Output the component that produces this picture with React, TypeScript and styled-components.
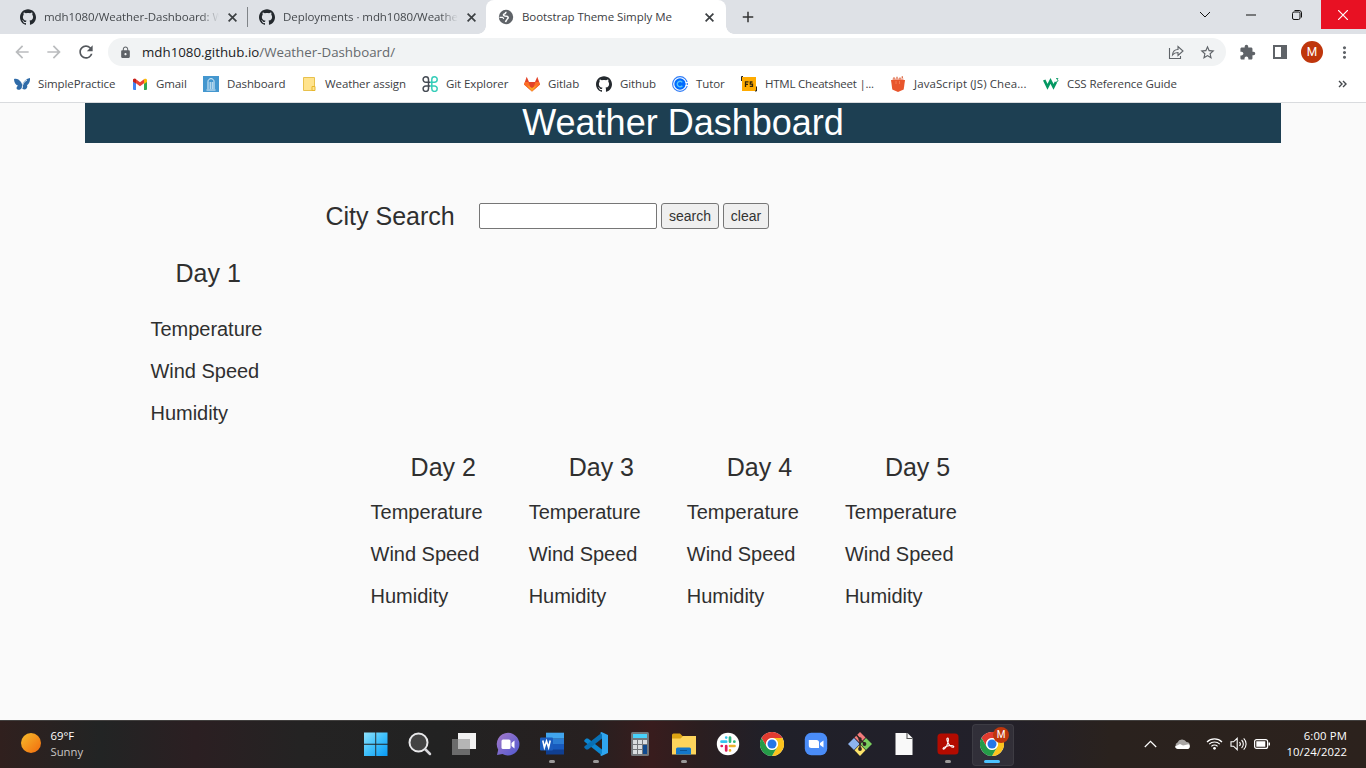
import React from 'react';
import styled, { createGlobalStyle } from 'styled-components';
import { SiGithub } from 'react-icons/si';
import {
  MdArrowBack, MdArrowForward, MdRefresh, MdLock, MdStarBorder, MdExtension,
  MdMoreVert, MdAdd,
} from 'react-icons/md';

const GlobalStyle = createGlobalStyle`
  * { box-sizing: border-box; }
  body { margin: 0; background: #fafafa; font-family: "Open Sans", "Noto Sans", sans-serif; }
`;

const Screen = styled.div`
  width: 1366px; height: 768px; display: flex; flex-direction: column; overflow: hidden;
`;

/* ---------- browser chrome ---------- */
const TabStrip = styled.div`
  height: 34px; flex: none; background: #dee1e6; display: flex; align-items: stretch; padding-left: 8px;
`;
const Tab = styled.div<{ $w: number; $pad?: number; $active?: boolean; $divider?: boolean }>`
  position: relative; width: ${p => p.$w}px; display: flex; align-items: center; padding-left: ${p => p.$pad ?? 12}px;
  color: ${p => (p.$active ? '#3c4043' : '#45494d')};
  background: ${p => (p.$active ? '#fff' : 'transparent')};
  border-radius: 8px 8px 0 0;
  ${p => p.$divider && `&::after { content: ''; position: absolute; right: 0; top: 7px; width: 1px; height: 20px; background: #808488; }`}
  ${p => p.$active && `
    &::before, &::after { content: ''; position: absolute; bottom: 0; width: 8px; height: 8px; }
    &::before { left: -8px; background: radial-gradient(circle at 0 0, transparent 7.5px, #fff 8px); }
    &::after { right: -8px; background: radial-gradient(circle at 100% 0, transparent 7.5px, #fff 8px); }
  `}
`;
const TabTitle = styled.span<{ $w: number; $fade?: boolean }>`
  width: ${p => p.$w}px; margin-left: 8px; font-size: 11.5px; line-height: 16px; white-space: nowrap; overflow: hidden;
  letter-spacing: -0.06px;
  ${p => p.$fade && 'mask-image: linear-gradient(90deg, #000 calc(100% - 18px), transparent);'}
`;
const CloseSvg = styled.svg`margin-left: 9px; width: 9px; height: 9px; flex: none; stroke: #3c4043; stroke-width: 1.7; fill: none;`;
const NewTab = styled(MdAdd)`margin: 8px 0 0 13px; width: 18px; height: 18px; color: #333;`;
const WindowButtons = styled.div`margin-left: auto; display: flex; height: 29px;`;
const WindowButton = styled.div<{ $close?: boolean }>`
  width: 46px; display: flex; align-items: center; justify-content: center;
  background: ${p => (p.$close ? '#e81123' : 'transparent')};
  color: ${p => (p.$close ? '#fff' : '#111')};
  padding-right: 2px;
  ${p => p.$close && 'width: 45px;'}
`;

const Toolbar = styled.div`
  height: 36px; flex: none; background: #fff; display: flex; align-items: center; color: #5f6368;
`;
const NavButton = styled.span<{ $off?: boolean }>`
  width: 32px; display: flex; justify-content: center; color: ${p => (p.$off ? '#babcbe' : '#54585d')};
  svg { width: 20px; height: 20px; }
`;
const NavGroup = styled.div`display: flex; padding-left: 6px; width: 108px;`;
const AddressBar = styled.div`
  width: 1118px; height: 28px; border-radius: 14px; background: #f1f3f4; display: flex; align-items: center; padding: 0 10px 0 11px;
`;
const Url = styled.span`
  margin-left: 10px; font-size: 13.3px; line-height: 20px; letter-spacing: 0.01px; color: #65696d; white-space: nowrap;
  b { font-weight: 400; color: #202124; }
`;
const AddressActions = styled.div`margin-left: auto; display: flex; align-items: center; gap: 15px;`;
const ToolbarActions = styled.div`display: flex; align-items: center; padding-left: 13px;`;
const PanelSvg = styled.svg`margin-left: 17px;`;
const Avatar = styled.span`
  width: 22px; height: 22px; margin: 0 12px 0 14px; border-radius: 50%; background: #bf360c; color: #fff;
  font: 12px/23px Roboto, sans-serif; text-align: center;
`;

const BookmarkBar = styled.div`
  height: 33px; flex: none; background: #fff; border-bottom: 1px solid #d9dbde; display: flex; align-items: center; padding: 0 0 4px 14px;
`;
const Bookmark = styled.div<{ $w: number; $ls?: number }>`
  width: ${p => p.$w}px; flex: none; display: flex; align-items: center; gap: 8px; color: #3c4043;
  font-size: 11.5px; line-height: 16px; white-space: nowrap; letter-spacing: ${p => p.$ls ?? -0.1}px;
  svg { width: 16px; height: 16px; flex: none; }
`;
const Overflow = styled.div`margin-left: auto; padding-right: 19px; display: flex;`;

/* ---------- weather page ---------- */
const Page = styled.main`
  flex: 1; background: #fafafa; color: #2f2f2f; font-family: "Liberation Sans", Arial, sans-serif; font-size: 20px;
`;
const Banner = styled.h1`
  margin: 0 85px; height: 40px; background: #1d3f52; color: #fff; font-size: 36px; font-weight: 400; line-height: 40px; text-align: center;
`;
const SearchRow = styled.form`
  display: flex; align-items: center; height: 28px; margin: 59px 0 0 325.500px;
`;
const SearchLabel = styled.label`font-size: 25px; line-height: 28px; width: 153.500px;`;
const CityInput = styled.input`
  width: 178px; height: 26px; border: 1px solid #767676; border-radius: 2px; background: #fff; padding: 1px 2px; font-size: 14px;
`;
const FormButton = styled.button<{ $w: number }>`
  width: ${p => p.$w}px; height: 26px; margin-left: 4px; padding: 0; border: 1px solid #767676; border-radius: 3px; background: #efefef;
  color: #333; font: 14px/18px "Liberation Sans", Arial, sans-serif;
`;
const Today = styled.section`margin: 29px 0 0 150.500px;`;
const DayName = styled.h3<{ $gap: number; $indent: number }>`
  margin: 0 0 ${p => p.$gap}px; padding-left: ${p => p.$indent}px; font-size: 25px; font-weight: 400; line-height: 28px;
`;
const Reading = styled.p`margin: 0; font-size: 20px; line-height: 42px; letter-spacing: -0.03px;`;
const Forecast = styled.section`margin: 19px 0 0 370.600px; display: flex;`;
const DayColumn = styled.div`width: 158.100px;`;

/* ---------- taskbar ---------- */
const Taskbar = styled.footer`
  height: 48px; flex: none; border-top: 1px solid #42403f; display: flex; color: #fff;
  background: linear-gradient(90deg, #30201e 0, #222424 100px, #2b1f22 195px, #242323 300px, #222222 440px, #272020 590px, #381c1d 652px, #2b1e20 700px, #202029 770px, #22202a 1000px, #2a221e 1110px, #2c221d 1366px);
`;
const Weather = styled.div`width: 354px; display: flex; padding: 7px 0 0 21px; gap: 9.500px; font-size: 11.300px; line-height: 16px;`;
const Sun = styled.span`width: 20px; height: 20px; margin-top: 5px; border-radius: 50%; background: linear-gradient(135deg, #f6bd2c, #f26a0d);`;
const Temp = styled.div`letter-spacing: 0;`;
const Sky = styled.div`color: #c9c6c4;`;
const TaskButton = styled.div<{ $active?: boolean; $dot?: boolean }>`
  position: relative; width: 44px; height: 45px; display: flex; align-items: center; justify-content: center;
  svg { width: 24px; height: 24px; position: relative; }
  ${p => p.$dot && `&::after { content: ''; position: absolute; bottom: 3px; left: 19px; width: 6px; height: 3px; border-radius: 2px; background: #9b9999; }`}
  ${p => p.$active && `
    &::before { content: ''; position: absolute; left: 2px; top: 3px; width: 40px; height: 40px; border-radius: 4px; background: #ffffff12; border: 1px solid #ffffff10; }
    &::after { content: ''; position: absolute; bottom: 3px; left: 14px; width: 16px; height: 3px; border-radius: 2px; background: #4cc2ff; }
  `}
`;
const Badge = styled.span`
  position: absolute; left: 23px; top: 6px; width: 16px; height: 16px; border-radius: 50%; background: #bf360c; font: 10px/16px Roboto, sans-serif; text-align: center;
`;
const Tray = styled.div`margin-left: auto; height: 45px; display: flex; align-items: center; padding-right: 19px;`;
const TraySvg = styled.svg<{ $mr: number }>`margin-right: ${p => p.$mr}px; flex: none;`;
const Clock = styled.div`width: 61px; font-size: 11.300px; line-height: 16px; white-space: nowrap;`;
const ClockLine = styled.div<{ $ls: number }>`
  display: flex; justify-content: flex-end; letter-spacing: ${p => p.$ls}px;
`;

const CloseGlyph = () => <CloseSvg viewBox="0 0 9 9"><path d="m.6.6 7.800 7.800M8.400.6.6 8.400" /></CloseSvg>;

const Chrome = () => (
  <svg viewBox="0 0 24 24">
    <circle cx="12" cy="12" r="12" fill="#fff" />
    <path d="M1.600 6A12 12 0 0 1 22.400 6H12a6 6 0 0 0-5.200 9z" fill="#e13b30" />
    <path d="M22.400 6A12 12 0 0 1 12 24l5.200-9A6 6 0 0 0 12 6z" fill="#fcc31e" />
    <path d="M12 24A12 12 0 0 1 1.600 6l5.200 9a6 6 0 0 0 10.400 0z" fill="#259b48" />
    <circle cx="12" cy="12" r="5.800" fill="#fff" /><circle cx="12" cy="12" r="4.500" fill="#2676e8" />
  </svg>
);

const bookmarks: { label: string; w: number; ls?: number; icon: React.ReactNode }[] = [
  { label: 'SimplePractice', w: 118, icon: (
    <svg viewBox="0 0 16 16" fill="#2f6ba8"><path d="M0 3c2-1 5 0 7 3 .6 1.200 1 2 1.200 3C9.500 5 12.500 2.500 16 2c.3 3-.7 5.500-3 7.300 1 1.800-.5 4.200-2.500 4.200-1.500 0-2.200-1-2.500-2-1 2-3 2.800-4.500 2C2 13 2.400 10.800 4 9.800 1.500 9 0 6 0 3z" /><path d="M8.300 12C8 9 10 5 13 4" stroke="#fff" strokeWidth=".9" fill="none" /></svg>) },
  { label: 'Gmail', w: 71, icon: (
    <svg viewBox="0 0 16 16"><path d="M1 4.500h3V14H2a1 1 0 0 1-1-1z" fill="#4285f4" /><path d="M12 4.500h3V13a1 1 0 0 1-1 1h-2z" fill="#34a853" /><path d="M1 4.200C1 2.700 2.700 2.300 4 3.200l4 3 4-3v4L8 10.200 4 7.200 1 5.500z" fill="#ea4335" /><path d="M12 3.200c1.300-.9 3-.5 3 1V6l-3 2z" fill="#fbbc04" /><path d="M1 4.200C1 3 2.500 2.300 4 3.300V7.500L1 5.500z" fill="#c5221f" /></svg>) },
  { label: 'Dashboard', w: 98, icon: (
    <svg viewBox="0 0 16 16"><path fill="#4497cf" d="M0 0h16v16H0z" /><path d="M3.500 14h9M5 13V5.500c0-3.800 6-3.800 6 0V13M7.200 13V6M9.200 13V6" fill="none" stroke="#e5f3fb" strokeWidth="1" /></svg>) },
  { label: 'Weather assign', w: 121, icon: (
    <svg viewBox="0 0 16 16"><path d="M2.500 1.500h11v10l-1 3h-10z" fill="#ffe38d" stroke="#e8c14d" /><path d="M11 10.500h3v4h-3z" fill="#ffe38d" stroke="#e8b72c" /></svg>) },
  { label: 'Git Explorer', w: 102, icon: (
    <svg viewBox="0 0 16 16" fill="none" strokeWidth="1.500"><path d="M6.500 10V3.500a2.700 2.700 0 1 0-2.700 2.700H8M8 10H3.800a2.700 2.700 0 1 0 2.700 2.700V9" stroke="#454b54" /><path d="M9.800 7V3.500a2.700 2.700 0 1 1 2.700 2.700H8M8 10h4.500a2.700 2.700 0 1 1-2.700 2.700V6" stroke="#35cdb9" /></svg>) },
  { label: 'Gitlab', w: 72, icon: (
    <svg viewBox="0 0 16 16"><path d="M2.700.8 5 6h6L13.300.8 16 8.500 8 15.500 0 8.500z" fill="#e24329" /><path d="M0 8.500 1 6h3.500L8 15.500zM16 8.500 15 6h-3.500L8 15.500z" fill="#fc6d26" /><path d="m3 9 5 6.500L13 9 8 12z" fill="#fca326" /></svg>) },
  { label: 'Github', w: 76, icon: <SiGithub color="#24292e" /> },
  { label: 'Tutor', w: 69, icon: (
    <svg viewBox="0 0 16 16" fill="none"><circle cx="8" cy="8" r="7.400" stroke="#2f7cf6" strokeWidth="1.100" /><circle cx="8" cy="8" r="5.700" fill="#006bff" /><path d="M10.300 6.300A2.800 2.800 0 1 0 10.300 9.700" stroke="#55c5f5" strokeWidth="1.400" /><path d="M13.500 6.500H16M13.500 9.500H16" stroke="#fff" /></svg>) },
  { label: 'HTML Cheatsheet |...', w: 149, ls: -0.22, icon: (
    <svg viewBox="0 0 16 16"><path d="M1 1h14v14H1z" fill="#ffab00" /><path d="M2 .5H.5V5M15.500 10.500V15H14" fill="none" stroke="#222" /><path d="M4.500 11V5.800H7.500M4.500 8.300H7M11.500 6H9.300v2.200h2.200v2.200H8.800" fill="none" stroke="#33260a" strokeWidth="1.300" /></svg>) },
  { label: 'JavaScript (JS) Chea...', w: 153, ls: 0.09, icon: (
    <svg viewBox="0 0 16 16"><path d="M2.500 2.500h11v3h-11z" fill="#f2a08a" /><path d="M4 1.200v2M7 .8v2M10 1.500v2M12.300.3v2" stroke="#dc6a45" strokeWidth="1.300" /><path d="M1 4h14l-1.300 9.500L8 16l-5.700-2.500z" fill="#e8552c" /><path d="M6 5v3M9.500 5v3" stroke="#f57a50" /></svg>) },
  { label: 'CSS Reference Guide', w: 140, icon: (
    <svg viewBox="0 0 16 16" fill="none" stroke="#059862"><path d="M1.200 4 4.500 10.800 7.500 5l3 5.800L13 6" strokeWidth="2.700" /><path d="M13 2.500h2L14 4c1.800 0 1.300 2-.8 1.700" strokeWidth=".8" /></svg>) },
];

const readings = ['Temperature', 'Wind Speed', 'Humidity'];

const apps: { icon: React.ReactNode; dot?: boolean; active?: boolean }[] = [
  { icon: <svg viewBox="0 0 24 24"><defs><linearGradient id="win" x2="1" y2="1"><stop stopColor="#8ee1fb" /><stop offset=".5" stopColor="#3fc0fb" /><stop offset="1" stopColor="#089af5" /></linearGradient></defs><path d="M0 .5h11.300v11.300H0zM12.200.5h11.300v11.300H12.200zM0 12.700h11.300V24H0zM12.200 12.700h11.300V24H12.200z" fill="url(#win)" /></svg> },
  { icon: <svg viewBox="0 0 24 24" fill="none"><circle cx="10.500" cy="10.500" r="9" fill="#5a5a5a99" stroke="#e8e8ea" strokeWidth="2" /><path d="m17.500 17.500 4.500 4.500" stroke="#d6d6da" strokeWidth="2.500" strokeLinecap="round" /></svg> },
  { icon: <svg viewBox="0 0 24 24"><path d="M6 1h18v16H6z" fill="#f2f2f2" /><path d="M0 7h18v16H0z" fill="#6b6b6b" /><path d="M6 7h12v10H6z" fill="#b5b5b5" /></svg> },
  { icon: <svg viewBox="0 0 24 24"><defs><linearGradient id="chat" x2="1" y2="1"><stop stopColor="#a57ac8" /><stop offset="1" stopColor="#5058d0" /></linearGradient></defs><path d="M12 .8a11.300 11.300 0 1 1-5.500 21.100L1 23l1.200-5.300A11.300 11.300 0 0 1 12 .8z" fill="url(#chat)" /><rect x="5.500" y="7.500" width="9" height="9.500" rx="1.500" fill="#fff" /><path d="m15.500 11 3-2.500v8l-3-2.500z" fill="#fff" /></svg> },
  { dot: true, icon: <svg viewBox="0 0 24 24"><path d="M6 .7h18v6H6z" fill="#41a5ee" /><path d="M6 6.500h18v6H6z" fill="#2b7cd3" /><path d="M6 12h18v6H6z" fill="#185abd" /><path d="M6 17.500h18V22.500H6z" fill="#103f91" /><rect y="5.500" width="13" height="13" rx="1" fill="#1b5cbe" /><path d="m2.800 8.500 1.600 7 2.100-6.500 2.100 6.500 1.600-7" fill="none" stroke="#fff" strokeWidth="1.600" /></svg> },
  { dot: true, icon: <svg viewBox="0 0 24 24"><path d="m.3 8.300 1.900-1.900 1.800.1L18 17.500v6L.3 9.500z" fill="#0c86d0" /><path d="m.3 15.700 1.900 1.900 1.800-.1L18 6.500v-6L.3 14.500z" fill="#0870b5" /><path d="M17.500 0 24 3v18l-6.500 3-1.500-1 2-1.500v-19L16 1z" fill="#2fa5f0" /></svg> },
  { icon: <svg viewBox="0 0 24 24"><rect x="3" y="0" width="18" height="24" rx="1.500" fill="#73777c" /><path d="M5 2h14v4H5z" fill="#48d1fb" /><path d="M5 8h4v4H5zM10 8h4v4h-4zM15 8h4v4h-4zM5 13h4v4H5zM10 13h4v4h-4zM5 18h4v4H5zM10 18h4v4h-4z" fill="#d9dde0" /><path d="M15 13h4v9h-4z" fill="#104a8e" /></svg> },
  { dot: true, icon: <svg viewBox="0 0 24 24"><path d="M0 3a1.500 1.500 0 0 1 1.500-1.500H8L10.500 4H24v6H0z" fill="#dda313" /><path d="M0 6.500h8.500L11 4h13v18.500H0z" fill="#fdd45c" /><path d="M4 22.500V17a1.500 1.500 0 0 1 1.500-1.500h12A1.500 1.500 0 0 1 19 17v5.500z" fill="#1377c9" /><path d="M8 18.500h7" stroke="#0c5494" /></svg> },
  { icon: <svg viewBox="0 0 24 24" fill="none" strokeWidth="2.700" strokeLinecap="round"><circle cx="12" cy="12" r="11.200" fill="#fff" /><path d="M10.200 5.500v.1M5.500 9.700h4.700" stroke="#36c5f0" /><path d="M14 5.500v4.200M18.300 9.700h.1" stroke="#2eb67d" /><path d="M14 14h4.500M14 18.400v.1" stroke="#ecb22e" /><path d="M10.200 14v4.500M5.700 14h.1" stroke="#e01e5a" /></svg> },
  { icon: <Chrome /> },
  { icon: <svg viewBox="0 0 24 24"><rect x=".8" y=".8" width="22.400" height="22.400" rx="6.500" fill="#4a8cf7" /><path d="M4.800 8h7.700a2.500 2.500 0 0 1 2.500 2.500V16H7.300a2.500 2.500 0 0 1-2.500-2.500zM16 11l3.500-2.500v7L16 13z" fill="#fff" /></svg> },
  { icon: <svg viewBox="0 0 24 24"><path d="m12 0 5.500 5.500L12 11 6.500 5.500z" fill="#f27b7b" /><path d="m6 6 5.700 6L6 18 0 12z" fill="#8db4f0" /><path d="m18 6 6 6-6 6-5.700-6z" fill="#7bcf5e" /><path d="m12 12.500 5.500 5.700L12 24l-5.500-5.800z" fill="#fce36b" /><path d="m8.500 3 3.500 4v10M12 7.500l4.500 4" fill="none" stroke="#2c2421" strokeWidth="1.500" /><circle cx="12" cy="7" r="1.700" fill="#2c2421" /><circle cx="12" cy="17" r="1.900" fill="#2c2421" /><circle cx="16.500" cy="12" r="1.900" fill="#2c2421" /></svg> },
  { icon: <svg viewBox="0 0 24 24"><path d="M3.500 1h12l5 5v17h-17z" fill="#f9f9f9" /><path d="M15 1v5.500h5.500" fill="none" stroke="#555" strokeWidth="1.100" /></svg> },
  { dot: true, icon: <svg viewBox="0 0 24 24" fill="none"><rect x="1.500" y="1.500" width="21" height="21" rx="3.500" fill="#b30b00" /><path d="M11.700 6c-1.300 0-1 2.500.3 4.800 1.300 2.500 3.400 4.500 5 4.500 1.400 0 1-1.800-1.800-1.800-2.700 0-8.200 1.500-8.200 3 0 1.500 2.500 0 3.800-2.900C12.300 10.500 13 6 11.700 6z" stroke="#fff" strokeWidth="1.100" /></svg> },
  { active: true, icon: <Chrome /> },
];

function Readings() {
  return <>{readings.map(r => <Reading key={r}>{r}</Reading>)}</>;
}

export default function App() {
  return (
    <Screen>
      <GlobalStyle />
      <TabStrip>
        <Tab $w={240} $divider>
          <SiGithub size={16} color="#24292e" />
          <TabTitle $w={175} $fade>mdh1080/Weather-Dashboard: Weather</TabTitle>
          <CloseGlyph />
        </Tab>
        <Tab $w={238} $pad={11}>
          <SiGithub size={16} color="#24292e" />
          <TabTitle $w={175} $fade>Deployments · mdh1080/Weather-Dashboard</TabTitle>
          <CloseGlyph />
        </Tab>
        <Tab $w={240} $active>
          <svg width="16" height="16" viewBox="0 0 16 16" fill="none"><circle cx="8" cy="8" r="7.200" fill="#5f6368" /><path d="M8.500 3.300c-1.800.5-.8 1.700-2.500 1.800-1 .5-.5 1.700.8 1.800 1.500 0 3.200.3 3.400 1.600.1 1-1 1.200-1.500 2.300l-1.300 2.200" stroke="#fff" strokeWidth="1.500" /><path d="M1.500 8.300h3.200l1.200 1.500" stroke="#fff" strokeWidth="1.200" /></svg>
          <TabTitle $w={174}>Bootstrap Theme Simply Me</TabTitle>
          <CloseGlyph />
        </Tab>
        <NewTab />
        <WindowButtons>
          <WindowButton><svg width="12" height="12" viewBox="0 0 12 12" fill="none" stroke="currentColor"><path d="m1 3 5 5 5-5" /></svg></WindowButton>
          <WindowButton><svg width="10" height="10" viewBox="0 0 10 10"><path d="M0 4.500h10v1H0z" fill="currentColor" /></svg></WindowButton>
          <WindowButton><svg width="10" height="10" viewBox="0 0 10 10" fill="none" stroke="currentColor"><rect x=".5" y="2" width="7.500" height="7.500" rx="1.500" /><path d="M2.500.5H7A2.500 2.500 0 0 1 9.500 3v4.500" /></svg></WindowButton>
          <WindowButton $close><svg width="10" height="10" viewBox="0 0 10 10" fill="none" stroke="currentColor" strokeWidth="1.200"><path d="m0 0 10 10M10 0 0 10" /></svg></WindowButton>
        </WindowButtons>
      </TabStrip>

      <Toolbar>
        <NavGroup>
          <NavButton $off><MdArrowBack /></NavButton>
          <NavButton $off><MdArrowForward /></NavButton>
          <NavButton><MdRefresh /></NavButton>
        </NavGroup>
        <AddressBar>
          <MdLock size={13} />
          <Url><b>mdh1080.github.io</b>/Weather-Dashboard/</Url>
          <AddressActions>
            <svg width="16" height="16" viewBox="0 0 16 16" fill="none" stroke="#5f6368" strokeWidth="1.100"><path d="M1.500 4v10.500h11V12" /><path d="M4.500 11c.3-4 2.500-5.500 5.500-5.500v-3L15 7l-5 4.500v-3C7.800 8.500 6 9 4.500 11z" /></svg>
            <MdStarBorder size={17} />
          </AddressActions>
        </AddressBar>
        <ToolbarActions>
          <MdExtension size={17} />
          <PanelSvg width="14" height="14" viewBox="0 0 14 14"><path d="M0 0h14v14H0zM2 2v10h6V2z" fill="#5f6368" fillRule="evenodd" /></PanelSvg>
          <Avatar>M</Avatar>
          <MdMoreVert size={19} />
        </ToolbarActions>
      </Toolbar>

      <BookmarkBar>
        {bookmarks.map(b => <Bookmark key={b.label} $w={b.w} $ls={b.ls}>{b.icon}<span>{b.label}</span></Bookmark>)}
        <Overflow><svg width="9" height="8" viewBox="0 0 9 8" fill="none" stroke="#45494d" strokeWidth="1.400"><path d="m1 1 3 3-3 3M5 1l3 3-3 3" /></svg></Overflow>
      </BookmarkBar>

      <Page>
        <Banner>Weather Dashboard</Banner>
        <SearchRow>
          <SearchLabel>City Search</SearchLabel>
          <CityInput />
          <FormButton type="button" $w={58}>search</FormButton>
          <FormButton type="button" $w={46}>clear</FormButton>
        </SearchRow>
        <Today>
          <DayName $gap={21} $indent={25}>Day 1</DayName>
          <Readings />
        </Today>
        <Forecast>
          {[2, 3, 4, 5].map(n => (
            <DayColumn key={n}><DayName $gap={10} $indent={40}>Day {n}</DayName><Readings /></DayColumn>
          ))}
        </Forecast>
      </Page>

      <Taskbar>
        <Weather><Sun /><div><Temp>69°F</Temp><Sky>Sunny</Sky></div></Weather>
        {apps.map((a, i) => <TaskButton key={i} $dot={a.dot} $active={a.active}>{a.icon}{a.active && <Badge>M</Badge>}</TaskButton>)}
        <Tray>
          <TraySvg $mr={17} width="13" height="8" viewBox="0 0 13 8" fill="none" stroke="#fff" strokeWidth="1.200"><path d="m.8 7 5.700-5.700L12.200 7" /></TraySvg>
          <TraySvg $mr={15} width="17" height="12" viewBox="0 0 17 12"><path d="M4 11a3.500 3.500 0 0 1-.5-6.500A5 5 0 0 1 12.500 4a3.600 3.600 0 0 1 1 7z" fill="#a9a6a4" /><path d="M4 11C2.500 11 1.200 10 1 8.500L6 6l3 1.500 5.500-1.200A2.600 2.600 0 0 1 14 11z" fill="#fff" /></TraySvg>
          <TraySvg $mr={7} width="17" height="13" viewBox="0 0 17 13" fill="none" stroke="#fff" strokeWidth="1.200"><path d="M1 5a10.500 10.500 0 0 1 15 0M3.200 7.200a7.500 7.500 0 0 1 10.600 0M5.400 9.400a4.400 4.400 0 0 1 6.200 0" /><circle cx="8.500" cy="11.300" r="1.400" fill="#fff" stroke="none" /></TraySvg>
          <TraySvg $mr={7} width="17" height="14" viewBox="0 0 17 14" fill="none" stroke="#fff" strokeWidth="1.100"><path d="M1 4.800h2.500L7.200 1.300v11.400L3.500 9.200H1zM9.500 5a3 3 0 0 1 0 4M11.600 3a5.500 5.500 0 0 1 0 8M13.700 1.300a8 8 0 0 1 0 11.400" /></TraySvg>
          <TraySvg $mr={15} width="17" height="10" viewBox="0 0 17 10"><rect x=".6" y=".6" width="13" height="8.800" rx="2" fill="none" stroke="#fff" strokeWidth="1.200" /><path d="M2.300 2.300h9v5.400h-9zM14.500 3.500H16v3h-1.500z" fill="#fff" /></TraySvg>
          <Clock><ClockLine $ls={0.15}>6:00 PM</ClockLine><ClockLine $ls={0.05}>10/24/2022</ClockLine></Clock>
        </Tray>
      </Taskbar>
    </Screen>
  );
}
